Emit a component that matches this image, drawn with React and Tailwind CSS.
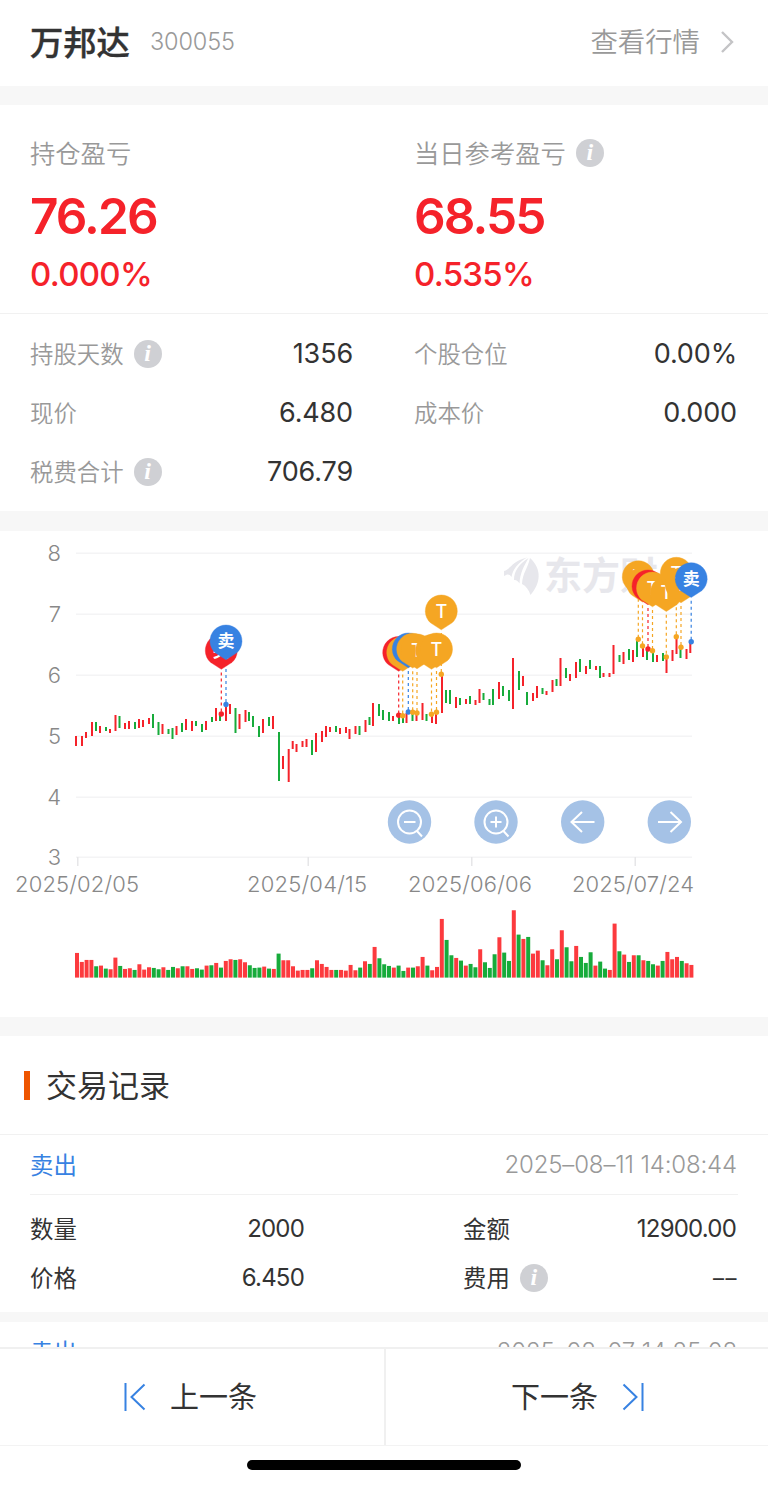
import React from "react";

const RED = "#f5222a";
const GREEN = "#17ab3b";
const ORANGE = "#f5a623";
const BLUE = "#3782e2";

export default function App() {
  return (
    <div className="w-[768px] h-[1486px] overflow-hidden bg-white text-[#333333] font-['Inter','Noto_Sans_CJK_SC',sans-serif] flex flex-col">
      <header className="h-[86px] shrink-0 flex items-center px-[30px] pb-[3px]">
        <h1 className="text-[33.3px] leading-[48px] pt-[2px] font-medium [-webkit-text-stroke:0.4px_#333]">万邦达</h1>
        <span className="ml-[20px] text-[23.5px] font-light tracking-[-0.1px] text-[#999]">300055</span>
        <span className="ml-auto text-[27.4px] leading-[40px] font-[350] text-[#999]">查看行情</span>
        <svg width="14" height="24" viewBox="0 0 14 24" fill="none" className="ml-[20px] mr-[4px]">
          <path d="M2 2l10 10L2 22" stroke="#c4c4c6" strokeWidth="2.4" />
        </svg>
      </header>
      <div className="h-[19px] shrink-0 bg-[#f7f7f7]" />

      <section className="h-[209px] shrink-0 grid grid-cols-2 border-b border-[#f1f1f1] pt-[29px]">
        <Profit label="持仓盈亏" value="76.26" percent="0.000%" />
        <Profit label="当日参考盈亏" value="68.55" percent="0.535%" info />
      </section>

      <section className="h-[197px] shrink-0 grid grid-cols-2 auto-rows-[59px] pt-[10px]">
        {details.map((item) => (
          <div
            key={item.label}
            className="flex items-center text-[23.4px] text-[#999] pl-[30px] pr-[31px]"
          >
            <span className="pt-[2px] font-[350]">{item.label}</span>
            {item.info && <Info />}
            <span className="ml-auto pt-[2px] text-[27px] tracking-[-0.15px] text-[#333]">{item.value}</span>
          </div>
        ))}
      </section>
      <div className="h-[20px] shrink-0 bg-[#f7f7f7]" />

      <Chart />
      <div className="h-[19px] shrink-0 bg-[#f7f7f7]" />

      <section className="h-[99px] shrink-0 flex items-center border-b border-[#f1f1f1] pl-[24px]">
        <span className="w-[6px] h-[29px] bg-[#ee5500]" />
        <h2 className="ml-[16px] pt-[2px] text-[31px] leading-[46px]">交易记录</h2>
      </section>

      <section className="h-[177px] shrink-0">
        <RecordHead time="2025–08–11 14:08:44" />
        <div className="mx-[30px] border-t border-[#f1f1f1] pt-[9px] grid grid-cols-[274px_434px] auto-rows-[49px] text-[23.4px]">
          <Field label="数量" value="2000" />
          <Field label="金额" value="12900.00" right />
          <Field label="价格" value="6.450" />
          <Field label="费用" value="––" right info />
        </div>
      </section>
      <div className="h-[10px] shrink-0 bg-[#f7f7f7]" />

      <section className="h-[25px] shrink-0 overflow-hidden">
        <RecordHead time="2025–08–07 14:25:08" />
      </section>

      <footer className="h-[139px] shrink-0 border-t-2 border-[#f0f0f0] bg-white">
        <div className="h-[97px] grid grid-cols-2 border-b border-[#f3f3f3] text-[29px]">
          <button className="flex items-center pl-[123px]">
            <svg width="24" height="30" viewBox="0 0 24 30" fill="none" stroke={BLUE} strokeWidth="2">
              <path d="M2.5 1v28M21.500 2.500L8.500 15l13 12.500" />
            </svg>
            <span className="ml-[23px] pt-[2px]">上一条</span>
          </button>
          <button className="flex items-center pl-[125px] border-l-2 border-[#f0f0f0]">
            <span className="pt-[2px]">下一条</span>
            <svg width="24" height="30" viewBox="0 0 24 30" fill="none" stroke={BLUE} strokeWidth="2" className="ml-[23px]">
              <path d="M21.500 1v28M2.500 2.500L15.500 15l-13 12.500" />
            </svg>
          </button>
        </div>
        <div className="mt-[14px] ml-[247px] w-[274px] h-[10px] rounded-full bg-black" />
      </footer>
    </div>
  );
}

function Info() {
  return (
    <span className="ml-[10px] size-[28px] shrink-0 rounded-full bg-[#cfd0d4] text-center font-['Liberation_Serif',serif] text-[24px] leading-[27px] font-bold italic text-white">
      i
    </span>
  );
}

function Profit({ label, value, percent, info }) {
  return (
    <div className="pl-[30px]">
      <div className="h-[38px] flex items-center text-[25.3px] font-[350] text-[#999]">
        <span className="pt-[2px]">{label}</span>
        {info && <Info />}
      </div>
      <p className="mt-[14px] text-[49.5px] leading-[60px] font-semibold tracking-[-1.9px] text-[#f5222a]">{value}</p>
      <p className="mt-[6px] text-[33px] leading-[44px] font-medium tracking-[-0.7px] text-[#f5222a]">{percent}</p>
    </div>
  );
}

function RecordHead({ time }) {
  return (
    <div className="h-[59px] flex items-center justify-between pl-[30px] pr-[31px]">
      <span className="pt-[2px] text-[23.4px] text-[#3782e2]">卖出</span>
      <span className="pt-px text-[24px] font-light tracking-[-0.15px] text-[#999]">{time}</span>
    </div>
  );
}

function Field({ label, value, right, info }) {
  return (
    <div className={right ? "flex items-center pl-[159px] pr-[2px]" : "flex items-center"}>
      <span className="pt-[2px]">{label}</span>
      {info && <Info />}
      <span className={value === "––" ? "ml-auto pt-[2px] -mr-[2px] text-[22px] tracking-[1.500px]" : "ml-auto text-[24px] tracking-[-0.8px]"}>
        {value}
      </span>
    </div>
  );
}

function Pin({ x, y, color, text }) {
  return (
    <g>
      <path
        d={`M${x} ${y + 18.8}L${x - 10.8} ${y + 11.8}A16 16 0 1 1 ${x + 10.8} ${y + 11.8}Z`}
        fill={color}
        stroke={color}
        strokeWidth="0.400"
        strokeLinejoin="round"
      />
      <text
        x={x}
        y={y + (text === "T" ? 6.5 : 6)}
        textAnchor="middle"
        fontSize={text === "T" ? 18 : 17}
        fontWeight={text === "T" ? 500 : 700}
        fill="#fff"
      >
        {text}
      </text>
    </g>
  );
}

function Chart() {
  return (
    <svg width="768" height="486" viewBox="0 531 768 486" className="shrink-0 block">
      {/* grid */}
      {[553, 614, 675, 736, 797, 857].map((y, i) => (
        <g key={y}>
          <rect x="76" y={y - 0.5} width="616" height="1.500" fill="#f4f4f5" />
          <text x="61" y={y + 8} textAnchor="end" fontSize="22" fontWeight="300" fill="#888">
            {8 - i}
          </text>
        </g>
      ))}
      {dates.map((d) => (
        <g key={d.label}>
          <rect x={d.tick} y="857" width="1.500" height="9" fill="#e6e6e8" />
          <text
            x={d.x}
            y="892"
            textLength={d.w}
            fontSize="22"
            fontWeight="300"
            fill="#888"
          >
            {d.label}
          </text>
        </g>
      ))}

      {/* watermark */}
      <g fill="#e7e7ec">
        <path d="M504 571C511 569 512 561 527 557.500C518 563 513 569 511.500 577C509.500 573.500 507 574 504 576Z" />
        <path d="M528.500 558C519 564 514 571 514 580C516 579.500 518 581 519.500 583.500C520 573 524 566 528.500 558Z" />
        <path d="M530 558C528 568 522.500 573 522 584C526 586 529 590 530.500 595C541 583 542 569 530 558Z" />
        <text x="544" y="589" fontSize="38" fontWeight="700">东方财</text>
      </g>

      {/* candles */}
      {candles.map(([c, x, top, bottom]) => (
        <rect
          key={x}
          x={x - 1}
          y={top}
          width="2"
          height={bottom - top}
          fill={c === "r" ? RED : GREEN}
        />
      ))}

      {/* trades */}
      {trades.map((t) => (
        <g key={t.x}>
          <line
            x1={t.x}
            y1={t.y + 22}
            x2={t.x}
            y2={t.dot}
            stroke={t.color}
            strokeWidth="1.200"
            strokeDasharray="3 3"
          />
          <circle cx={t.x} cy={t.dot} r="2.700" fill={t.color} />
        </g>
      ))}
      {trades.map((t) => (
        <Pin key={t.x} {...t} />
      ))}

      {/* volume */}
      {volumes.split(" ").map((v, i) => {
        const h = Number(v.slice(1)) / 3;
        return (
          <rect
            key={i}
            x={75 + i * 4.8}
            y={977.6 - h}
            width="4"
            height={h}
            fill={v[0] === "r" ? "#fc3a3e" : GREEN}
          />
        );
      })}

      {/* zoom and pan */}
      {[409.5, 496, 582.7, 669.3].map((x) => (
        <circle key={x} cx={x} cy="822" r="21.700" fill="#a5c2e6" />
      ))}
      <g fill="none" stroke="#fff" strokeWidth="2">
        <circle cx="409.500" cy="822" r="11.500" />
        <path d="M416.500 830.500l5.500 6M404 822h11.500" />
        <circle cx="496" cy="822" r="11.500" />
        <path d="M503 830.500l5.500 6M490.500 822h11M496 816.500v11" />
        <path d="M594.500 822H572M582 812l-10.500 10 10.500 10" />
        <path d="M658 822h22.500M670.500 812l10.500 10-10.500 10" />
      </g>
    </svg>
  );
}

const details = [
  { label: "持股天数", value: "1356", info: true },
  { label: "个股仓位", value: "0.00%" },
  { label: "现价", value: "6.480" },
  { label: "成本价", value: "0.000" },
  { label: "税费合计", value: "706.79", info: true },
];

const dates = [
  { label: "2025/02/05", x: 15, w: 124, tick: 77 },
  { label: "2025/04/15", x: 247, w: 120, tick: 307.5 },
  { label: "2025/06/06", x: 408, w: 124, tick: 471 },
  { label: "2025/07/24", x: 572, w: 122, tick: 634.5 },
];

const trades = [
  { x: 221.3, y: 650.5, dot: 714, color: RED, text: "买" },
  { x: 226, y: 641, dot: 704.5, color: BLUE, text: "卖" },
  { x: 398.7, y: 652.5, dot: 715.3, color: RED, text: "买" },
  { x: 402.7, y: 652.5, dot: 715.7, color: ORANGE, text: "T" },
  { x: 408.3, y: 649, dot: 712, color: BLUE, text: "卖" },
  { x: 412.7, y: 649.3, dot: 712.3, color: ORANGE, text: "T" },
  { x: 417, y: 650, dot: 713, color: ORANGE, text: "T" },
  { x: 431.5, y: 650.5, dot: 714.3, color: ORANGE, text: "T" },
  { x: 436.5, y: 649, dot: 712.3, color: ORANGE, text: "T" },
  { x: 441.3, y: 611, dot: 674.3, color: ORANGE, text: "T" },
  { x: 638.3, y: 576.7, dot: 639.3, color: ORANGE, text: "T" },
  { x: 642.5, y: 583.3, dot: 646, color: ORANGE, text: "T" },
  { x: 648, y: 586, dot: 649, color: RED, text: "买" },
  { x: 652.5, y: 588, dot: 650.7, color: ORANGE, text: "T" },
  { x: 666.3, y: 592.7, dot: 657, color: ORANGE, text: "T" },
  { x: 676.3, y: 573.3, dot: 636.7, color: ORANGE, text: "T" },
  { x: 681, y: 584, dot: 647.3, color: ORANGE, text: "T" },
  { x: 691.2, y: 578.7, dot: 641.7, color: BLUE, text: "卖" },
];

// colour, x, high, low
const candles = [
  ["r", 76, 736, 746], ["r", 82, 736, 746], ["r", 86, 732, 738], ["r", 92, 722, 736],
  ["g", 96, 722, 731], ["r", 100, 726, 733], ["g", 106, 727, 731], ["r", 110, 729, 733],
  ["r", 115.5, 715, 731], ["g", 119.5, 716, 728], ["r", 125, 723, 729], ["r", 129, 721, 729],
  ["g", 135, 722, 729], ["r", 139, 719, 728], ["r", 143, 720, 727], ["r", 149, 718, 724],
  ["g", 153, 714, 728], ["g", 158.5, 722, 735], ["r", 162.5, 724, 734], ["g", 168.5, 729, 734],
  ["g", 172.5, 728, 739], ["r", 176.5, 726, 735], ["g", 182, 723, 732], ["r", 186, 719, 730],
  ["r", 192, 721, 731], ["g", 196, 721, 726], ["g", 202, 724, 732], ["r", 206, 721, 730],
  ["g", 212, 717, 722], ["r", 216, 708, 721], ["g", 220, 713, 721], ["r", 226, 704, 721],
  ["r", 230, 704, 714], ["g", 235.5, 708, 733], ["r", 239.5, 714, 729], ["r", 245.5, 710, 722],
  ["g", 249, 712, 721], ["g", 253, 716, 727], ["g", 259, 726, 737], ["r", 263, 719, 733],
  ["g", 269, 717, 726], ["r", 273, 716, 729], ["g", 279, 732, 781], ["r", 283, 756, 769],
  ["r", 288.7, 749, 782], ["r", 292.7, 741, 749], ["r", 296.5, 744, 752], ["r", 302.5, 741, 747],
  ["r", 306.5, 739, 747], ["g", 312, 740, 755], ["r", 316, 733, 752], ["r", 322, 731, 742],
  ["r", 326, 726, 737], ["r", 330, 727, 732], ["g", 336, 726, 732], ["r", 340, 728, 734],
  ["r", 346, 727, 733], ["r", 349.5, 729, 739], ["r", 355.5, 726, 734], ["g", 359.5, 726, 735],
  ["r", 365.5, 720, 732], ["g", 369.5, 717, 725], ["r", 373, 703, 726], ["g", 379, 704, 716],
  ["g", 383, 710, 720], ["g", 389, 712, 721], ["r", 393, 716, 721], ["g", 399, 715, 724],
  ["g", 403, 717, 723], ["r", 406.5, 713, 723], ["g", 412.5, 712, 721], ["r", 416.5, 713, 721],
  ["r", 422.5, 703, 720], ["g", 426.5, 714, 721], ["r", 432, 713, 723], ["r", 436, 711, 724],
  ["r", 442, 675, 713], ["g", 446, 690, 703], ["g", 450, 690, 704], ["r", 456, 697, 708],
  ["g", 460, 698, 705], ["r", 466, 699, 704], ["g", 470, 696, 704], ["r", 475.5, 700, 705],
  ["r", 479.5, 689, 703], ["g", 483.5, 693, 700], ["g", 489.5, 699, 705], ["g", 493, 689, 705],
  ["r", 499, 682, 699], ["g", 503, 686, 696], ["g", 509, 690, 701], ["r", 513, 658, 709],
  ["g", 519, 671, 690], ["r", 523, 676, 686], ["g", 527, 692, 705], ["r", 533, 693, 701],
  ["r", 537, 686, 698], ["g", 542.5, 688, 694], ["r", 546.5, 691, 695], ["r", 552.5, 680, 692],
  ["g", 556.5, 679, 686], ["r", 560.5, 658, 686], ["g", 566, 668, 678], ["r", 570, 674, 681],
  ["r", 576, 662, 678], ["g", 580, 659, 672], ["r", 586, 666, 674], ["g", 590, 660, 669],
  ["r", 596, 666, 670], ["g", 600, 666, 678], ["r", 603.5, 673, 677], ["r", 609.5, 673, 677],
  ["r", 613.5, 645, 674], ["g", 619.5, 655, 662], ["r", 623.5, 652, 664], ["g", 629, 649, 660],
  ["r", 633, 650, 662], ["g", 637, 640, 657], ["r", 643, 646, 657], ["g", 647, 650, 660],
  ["g", 653, 652, 662], ["r", 657, 655, 662], ["g", 663, 653, 661], ["r", 666.5, 657, 673],
  ["r", 672.5, 650, 661], ["r", 676.5, 637, 654], ["g", 680.5, 647, 658], ["r", 686.5, 649, 659],
  ["r", 690.3, 643, 653],
];

const volumes =
  "r74 r47 r53 r53 g34 r36 g27 r25 r60 g35 r26 r28 g23 r40 r24 r31 g29 g25 r31 g23 g32 r28 " +
  "g34 r34 r26 g28 g24 r36 g37 r44 g30 r50 r55 g53 r55 r46 g37 g29 g30 r33 g27 r26 g72 r52 " +
  "r52 r34 r21 r23 r23 g28 r52 r41 r32 r23 g23 r23 r21 r38 r22 g30 r49 g41 r92 g58 g40 g35 " +
  "r30 g36 g20 r30 g30 r34 r62 g36 r22 r32 r176 g113 g67 r59 g51 r36 g41 g31 r85 g46 g29 g70 " +
  "r121 g75 g50 r202 g129 r116 g122 r72 r81 g52 r37 r85 g55 r142 g91 g49 r95 g62 g44 g76 r36 " +
  "g48 g27 r23 r162 g79 r69 g47 r67 g67 r52 g50 g40 r36 g50 r77 r55 r62 g50 r43 r38";
